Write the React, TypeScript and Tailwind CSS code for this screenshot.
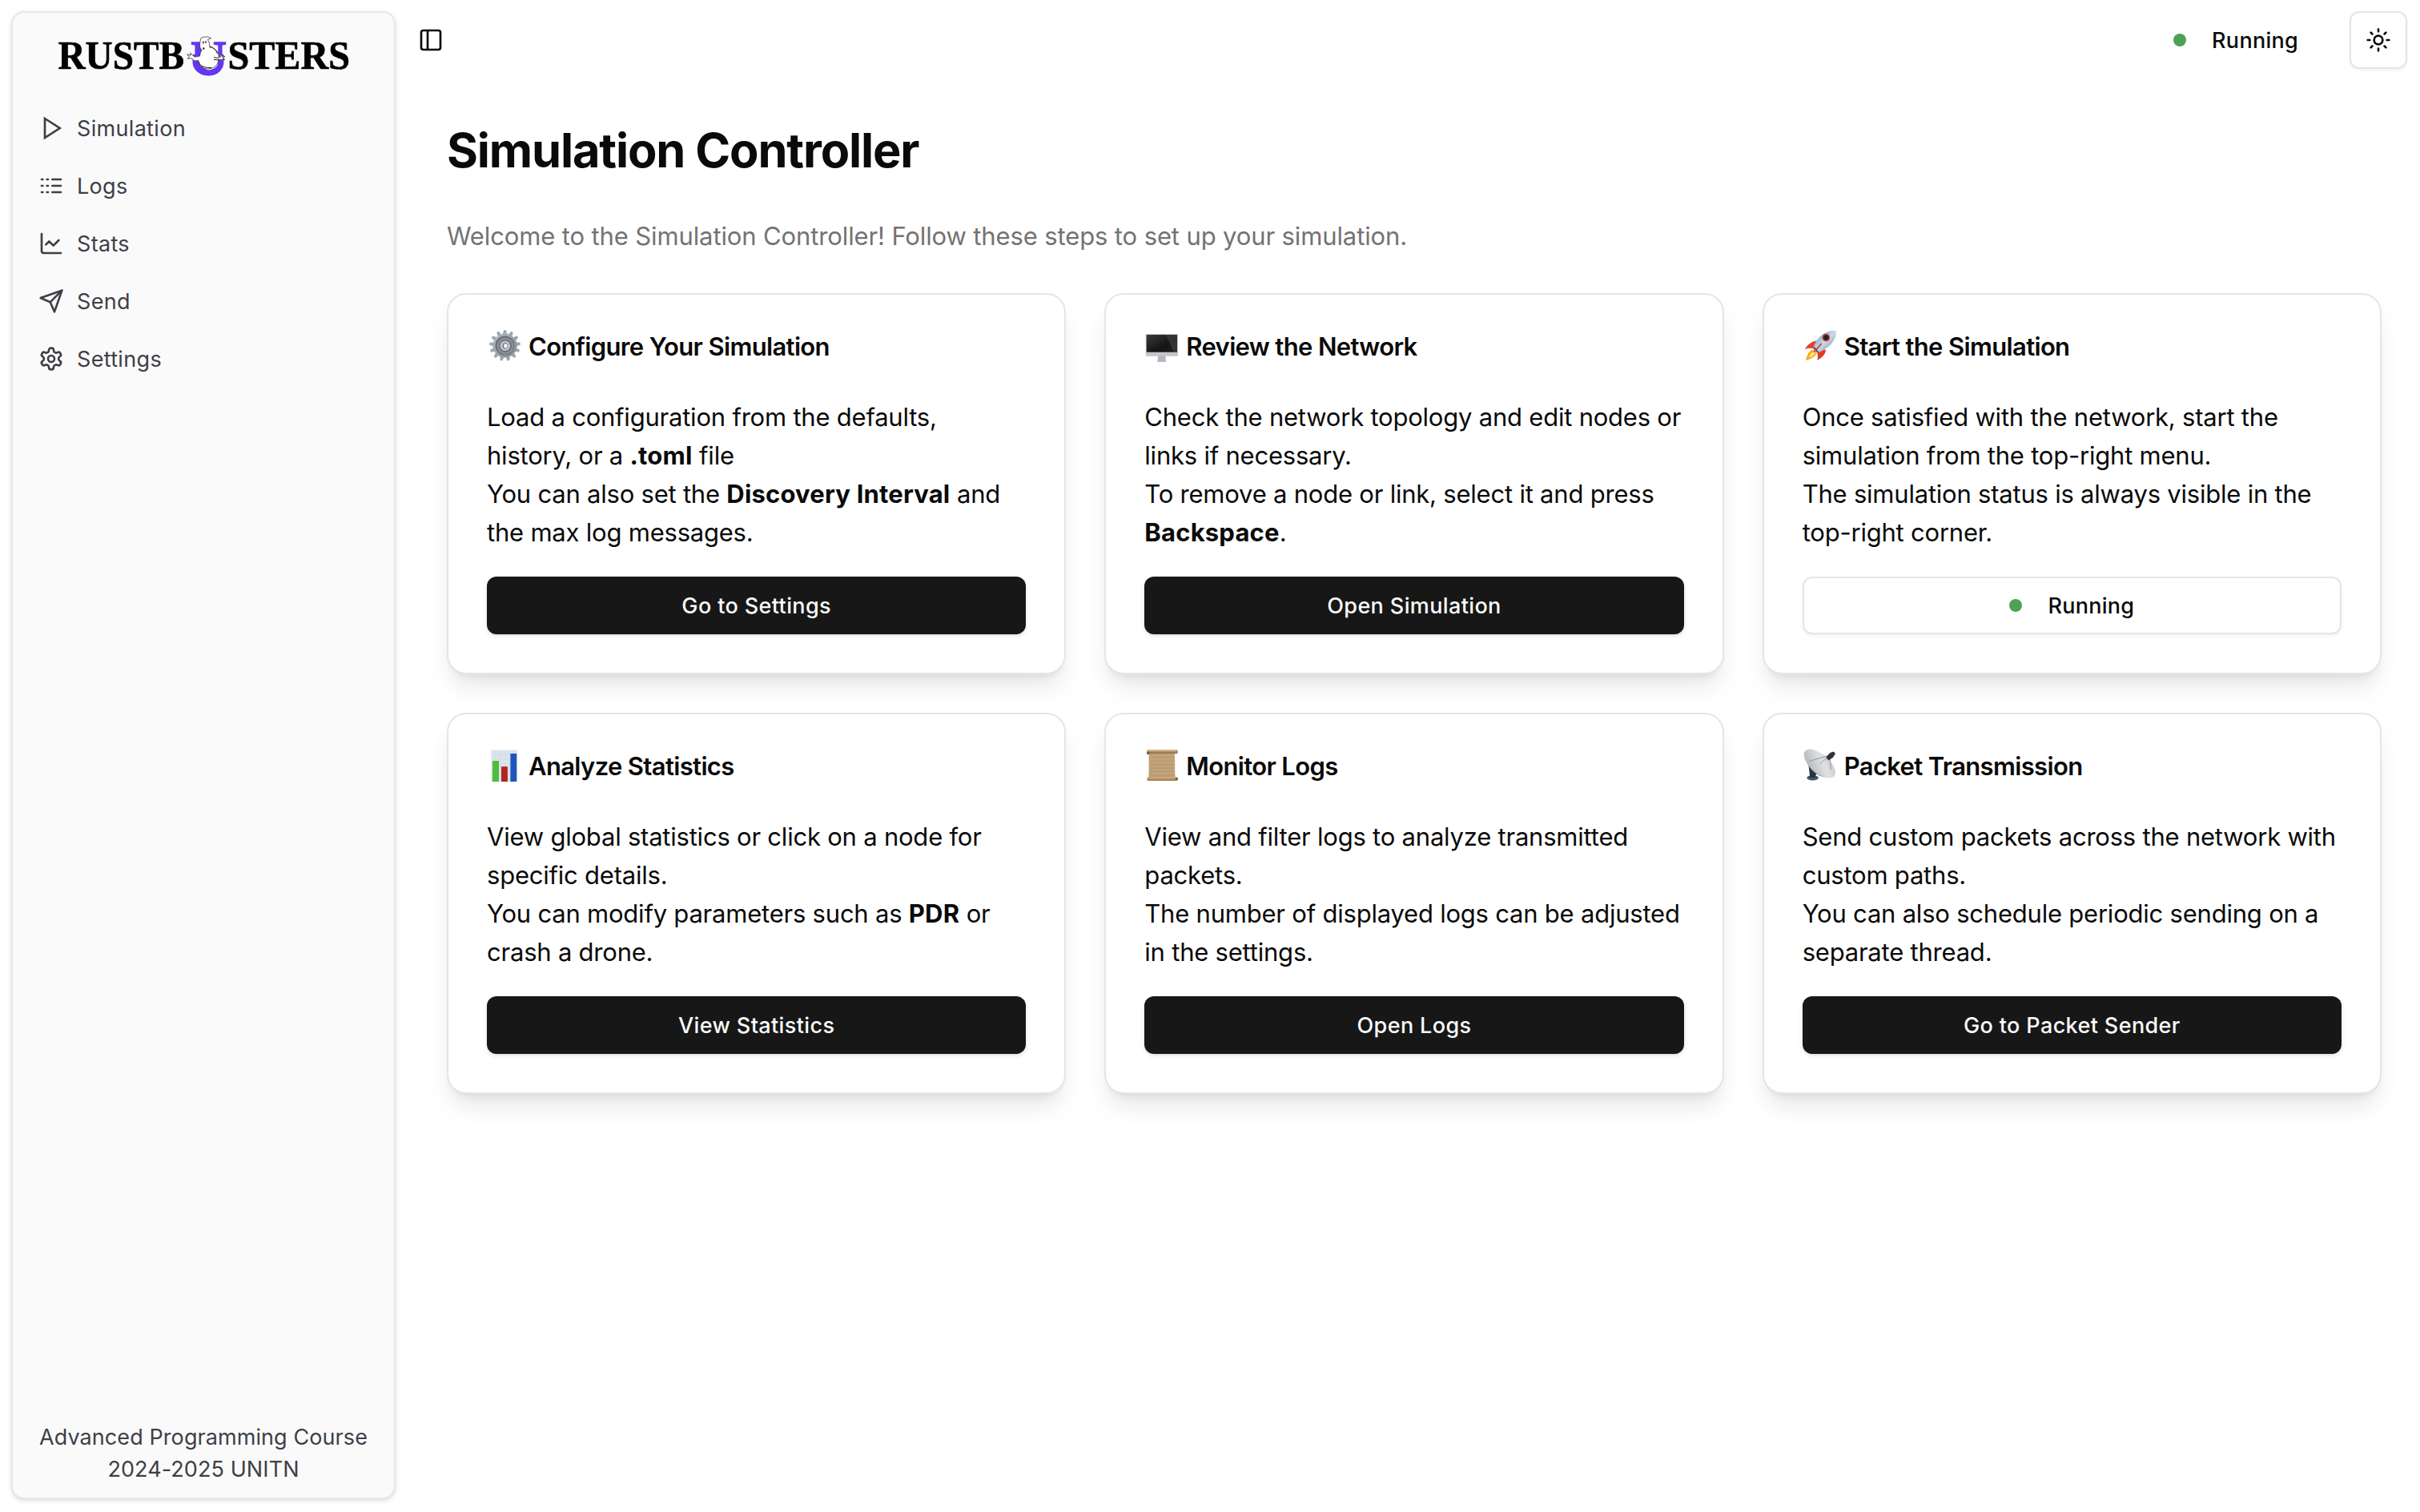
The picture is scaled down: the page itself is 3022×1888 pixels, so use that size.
import type { ReactNode } from "react";

function Icon({ children }: { children: ReactNode }) {
  return (
    <svg
      viewBox="0 0 24 24"
      className="size-8 shrink-0"
      fill="none"
      stroke="currentColor"
      strokeWidth="2"
      strokeLinecap="round"
      strokeLinejoin="round"
    >
      {children}
    </svg>
  );
}

const navItems: { label: string; icon: ReactNode }[] = [
  { label: "Simulation", icon: <polygon points="6 3 20 12 6 21 6 3" strokeLinejoin="miter" /> },
  {
    label: "Logs",
    icon: <path d="M13 12h8M13 18h8M13 6h8M3 12h1M3 18h1M3 6h1M8 12h1M8 18h1M8 6h1" />,
  },
  {
    label: "Stats",
    icon: (
      <>
        <path d="M3 3v16a2 2 0 0 0 2 2h16" />
        <path d="m19 9-5 5-4-4-3 3" />
      </>
    ),
  },
  {
    label: "Send",
    icon: (
      <>
        <path d="m22 2-7 20-4-9-9-4Z" />
        <path d="M22 2 11 13" />
      </>
    ),
  },
  {
    label: "Settings",
    icon: (
      <>
        <path d="M12.22 2h-.44a2 2 0 0 0-2 2v.18a2 2 0 0 1-1 1.73l-.43.25a2 2 0 0 1-2 0l-.15-.08a2 2 0 0 0-2.73.73l-.22.38a2 2 0 0 0 .73 2.73l.15.1a2 2 0 0 1 1 1.72v.51a2 2 0 0 1-1 1.74l-.15.09a2 2 0 0 0-.73 2.73l.22.38a2 2 0 0 0 2.73.73l.15-.08a2 2 0 0 1 2 0l.43.25a2 2 0 0 1 1 1.73V20a2 2 0 0 0 2 2h.44a2 2 0 0 0 2-2v-.18a2 2 0 0 1 1-1.73l.43-.25a2 2 0 0 1 2 0l.15.08a2 2 0 0 0 2.73-.73l.22-.39a2 2 0 0 0-.73-2.73l-.15-.08a2 2 0 0 1-1-1.74v-.5a2 2 0 0 1 1-1.74l.15-.09a2 2 0 0 0 .73-2.73l-.22-.38a2 2 0 0 0-2.73-.73l-.15.08a2 2 0 0 1-2 0l-.43-.25a2 2 0 0 1-1-1.73V4a2 2 0 0 0-2-2z" />
        <circle cx="12" cy="12" r="3" />
      </>
    ),
  },
];

function Logo() {
  return (
    <svg viewBox="70 30 370 80" className="h-20 w-[370px] overflow-visible">
      <g fontFamily="'Liberation Serif', serif" fontWeight="700">
        <g fill="#000" stroke="#000" strokeWidth=".7">
          <text x="73.5" y="86.400" fontSize="50.500" textLength="157.500" lengthAdjust="spacingAndGlyphs">
            RUSTB
          </text>
          <text x="285.5" y="86.400" fontSize="50.500" textLength="152.500" lengthAdjust="spacingAndGlyphs">
            STERS
          </text>
        </g>
        <text x="239" y="92.500" fontSize="62" textLength="45" lengthAdjust="spacingAndGlyphs" fill="#6336f5" stroke="#6336f5" strokeWidth="1.500">
          U
        </text>
      </g>
      <path d="M245 68v9.500a16 13.500 0 0 0 32 0V68" fill="none" stroke="#6336f5" strokeWidth="7" />
      <path
        d="M252 47.700c2-1.500 6-2 8.500-1.700l4 1.800-4.200 1.700c2.300 3.500 2.700 6 2.400 9.500 6 0 11.500 5.500 11.700 12.200l2.800-3.500 1 3 3.800-.2-3.300 2.500 3.200 1.300-4.500.4-3.600-.4C273.500 81.500 268 86 260 86c-6 0-10.500-4-11.300-10.500l-4.700.6-4.200-3.300-4.800.3 2.600-2-3.100-3.300 4.700 1.300-.5-3 5.200 5 6.600-1.100c.4-3 .8-5.300 2.600-7.500-4-3-2.600-9.500-1.100-14.800z"
        fill="#fff"
        stroke="#333"
        strokeWidth=".8"
        strokeLinejoin="round"
      />
      <path
        d="M263 58c5 1.500 8 4.500 9.500 9M249 77c1 3 3 5 5.500 6.500M268 71.500l5 1 4-2M268 74.500l7 .5M253 82.500c4 1.500 8 2.500 12 2"
        fill="none"
        stroke="#222"
        strokeWidth="1"
      />
      <ellipse cx="254.800" cy="53" rx=".8" ry="1.400" fill="#111" />
      <ellipse cx="258" cy="52.600" rx=".8" ry="1.400" fill="#111" />
      <ellipse cx="255.300" cy="60.500" rx="1.200" ry="1.300" fill="#222" />
    </svg>
  );
}

const gearTeeth = Array.from({ length: 13 }, (_, i) => (i * 360) / 13);

function GearEmoji() {
  return (
    <svg viewBox="8 8 44 44" className="-mt-px size-11 shrink-0">
      <defs>
        <linearGradient id="gear" x1="0" y1="0" x2="1" y2="1">
          <stop offset="0" stopColor="#b4bdc5" />
          <stop offset="1" stopColor="#818a93" />
        </linearGradient>
      </defs>
      {gearTeeth.map((a) => (
        <path key={a} d="M27.700 18.500 29 12.200h3l1.300 6.300z" fill="#9ca7b1" transform={`rotate(${a} 30.500 31.500)`} />
      ))}
      <circle cx="30.500" cy="31.500" r="15" fill="url(#gear)" />
      <circle cx="30.500" cy="31.500" r="12" fill="#666e76" />
      <circle cx="31" cy="32" r="10.500" fill="#8b939a" />
      <circle cx="31" cy="32" r="8" fill="#6b7279" />
      <circle cx="30.800" cy="31.700" r="6.300" fill="#bcc3c9" />
      <ellipse cx="30.800" cy="31.800" rx="3.200" ry="3.600" fill="#6d747b" />
      <ellipse cx="31.300" cy="32" rx="2.100" ry="2.700" fill="#fff" />
    </svg>
  );
}

function MonitorEmoji() {
  return (
    <svg viewBox="9.300 8 44 44" className="-mt-px size-11 shrink-0">
      <defs>
        <linearGradient id="screen" x1="0" y1="0" x2="1" y2="1">
          <stop offset="0" stopColor="#3b3b3b" />
          <stop offset=".6" stopColor="#151515" />
          <stop offset="1" stopColor="#1e1e1e" />
        </linearGradient>
      </defs>
      <path d="M26.300 44h9.400l.6 8H25.700z" fill="#b5b7bb" />
      <rect x="11" y="17" width="40.300" height="27.800" rx="1.200" fill="#c3c5c9" />
      <rect x="12" y="18" width="38.300" height="21.700" fill="url(#screen)" />
      <path d="M36 18h14.300v21.700H46z" fill="#444" opacity=".6" />
    </svg>
  );
}

function RocketEmoji() {
  return (
    <svg viewBox="10.700 8 44 44" className="-mt-px size-11 shrink-0">
      <defs>
        <linearGradient id="hull" x1="0" y1="0" x2="1" y2="1">
          <stop offset=".1" stopColor="#5b8fc2" />
          <stop offset=".5" stopColor="#cfdbe6" />
          <stop offset="1" stopColor="#557fae" />
        </linearGradient>
      </defs>
      <path d="M29.500 25.500c-7 .3-12 4-16 10.500 4-1.300 8-1.500 12-.5z" fill="#e5402a" />
      <path d="M39.500 36.500c.5 5-4 10-10.500 13.500 1.200-4 .8-8-1-11.500z" fill="#e03a24" />
      <path d="M24 36.500c-4 .5-7.500 5-9.300 13.500 6.800-1.800 11.500-4.300 13.300-9z" fill="#f6a51d" />
      <path d="M24.500 39c-3 1-5 4-6.500 7.700 4-.7 6.800-2.500 8.500-5.200z" fill="#ffe36a" />
      <path d="M52.300 13.300c1 6-2.500 13.500-8.500 18.800-4.500 4-9.800 7.300-14.800 8.400l-5-5.500c1-5 4.500-10.500 8.500-14.700 5.500-5.300 13-8.300 19.800-7z" fill="url(#hull)" />
      <path d="m24 35 5 5.500 2-1-5.700-6.500z" fill="#4a5360" />
      <circle cx="40" cy="21.500" r="4.800" fill="#c8382c" />
      <circle cx="40" cy="21.500" r="3.200" fill="#2a2027" />
      <path d="m34 29.500-8.500 9.500" stroke="#c8382c" strokeWidth="1.800" strokeLinecap="round" />
    </svg>
  );
}

function ChartEmoji() {
  return (
    <svg viewBox="8 7 44 44" className="-mt-px size-11 shrink-0">
      <rect x="13.300" y="11.500" width="32.700" height="39.500" fill="#dce5ed" />
      <path d="M14 17h31.500M14 23h31.500M14 29h31.500M14 35h31.500M14 41h31.500M14 47h31.500M19 12v39M25 12v39M31 12v39M37 12v39M43 12v39" stroke="#cbd8e4" strokeWidth=".6" />
      <rect x="15" y="25" width="8" height="26" fill="#4fbc3c" />
      <rect x="26" y="32.200" width="7.900" height="18.800" fill="#b3251e" />
      <rect x="37.400" y="16" width="7.800" height="35" fill="#1f55bd" />
    </svg>
  );
}

function ScrollEmoji() {
  return (
    <svg viewBox="9.300 7 44 44" className="-mt-px size-11 shrink-0">
      <path d="M15 15h32c1 10 0 21 1 32H14.500c1-11 0-21 .5-32z" fill="#c2a279" />
      <path d="M16.500 20.500H46M16.500 25H46M16 29.500h29.500M16 34h29.500M16 38.500h30M15.500 43H47" stroke="#b0906a" strokeWidth=".8" />
      <rect x="12.500" y="11.600" width="38.500" height="4.600" rx="1.500" fill="#a07c52" />
      <rect x="14" y="11.600" width="35.500" height="1.800" fill="#cdb08a" />
      <rect x="12.800" y="45.600" width="38" height="4.500" rx="1.500" fill="#a98559" />
      <rect x="14" y="45.600" width="34" height="1.700" fill="#cdb08a" />
      <rect x="12.500" y="14" width="3" height="3" fill="#7b5a38" />
      <rect x="48.500" y="45.800" width="2.500" height="3.200" fill="#7b5a38" />
    </svg>
  );
}

function DishEmoji() {
  return (
    <svg viewBox="10.700 7 44 44" className="-mt-px size-11 shrink-0">
      <defs>
        <linearGradient id="dish" x1="0" y1="1" x2="1" y2="0">
          <stop offset="0" stopColor="#a9adb2" />
          <stop offset=".6" stopColor="#dfe1e4" />
          <stop offset="1" stopColor="#bfc2c6" />
        </linearGradient>
      </defs>
      <ellipse cx="23.300" cy="46.300" rx="7.200" ry="3.200" fill="#41556e" />
      <path d="M18 29l10 12-2 5h-6z" fill="#2c3238" />
      <path d="M13.500 13.500c-1 11 5 21 14 27.500 7.500 5 15.500 6 22.500 3.500z" fill="#9a9ea3" />
      <ellipse cx="32" cy="28.500" rx="24" ry="11.500" transform="rotate(41 32 28.500)" fill="url(#dish)" />
      <path d="M19 25.500 43 18.500M32 29 43 19.500M46 36l-1-15" stroke="#8b8f94" strokeWidth=".9" fill="none" />
      <path d="m40 20.500 5-5.500 4.500-1.500 2.200 2.500-3.200 5-5.500 3.500z" fill="#2f3337" />
    </svg>
  );
}

function StatusDot() {
  return <span className="size-4 rounded-full bg-[#4ea255]" />;
}

interface CardData {
  emoji: ReactNode;
  title: string;
  body: ReactNode;
  action?: string;
}

function Strong({ children }: { children: ReactNode }) {
  return <strong className="font-bold tracking-[0.006em]">{children}</strong>;
}

const cards: CardData[] = [
  {
    emoji: <GearEmoji />,
    title: "Configure Your Simulation",
    body: (
      <>
        Load a configuration from the defaults,
        <br />
        history, or a <Strong>.toml</Strong> file
        <br />
        You can also set the <Strong>Discovery Interval</Strong> and
        <br />
        the max log messages.
      </>
    ),
    action: "Go to Settings",
  },
  {
    emoji: <MonitorEmoji />,
    title: "Review the Network",
    body: (
      <>
        Check the network topology and edit nodes or
        <br />
        links if necessary.
        <br />
        To remove a node or link, select it and press
        <br />
        <Strong>Backspace</Strong>.
      </>
    ),
    action: "Open Simulation",
  },
  {
    emoji: <RocketEmoji />,
    title: "Start the Simulation",
    body: (
      <>
        Once satisfied with the network, start the
        <br />
        simulation from the top-right menu.
        <br />
        The simulation status is always visible in the
        <br />
        top-right corner.
      </>
    ),
  },
  {
    emoji: <ChartEmoji />,
    title: "Analyze Statistics",
    body: (
      <>
        View global statistics or click on a node for
        <br />
        specific details.
        <br />
        You can modify parameters such as <Strong>PDR</Strong> or
        <br />
        crash a drone.
      </>
    ),
    action: "View Statistics",
  },
  {
    emoji: <ScrollEmoji />,
    title: "Monitor Logs",
    body: (
      <>
        View and filter logs to analyze transmitted
        <br />
        packets.
        <br />
        The number of displayed logs can be adjusted
        <br />
        in the settings.
      </>
    ),
    action: "Open Logs",
  },
  {
    emoji: <DishEmoji />,
    title: "Packet Transmission",
    body: (
      <>
        Send custom packets across the network with
        <br />
        custom paths.
        <br />
        You can also schedule periodic sending on a
        <br />
        separate thread.
      </>
    ),
    action: "Go to Packet Sender",
  },
];

function Card({ emoji, title, body, action }: CardData) {
  return (
    <section className="flex h-[476px] flex-col rounded-3xl border-2 border-[#e5e5e5] bg-white px-12 pt-[41px] pb-12 shadow-[0_20px_30px_-6px_rgba(0,0,0,0.1),0_8px_12px_-8px_rgba(0,0,0,0.1)]">
      <h2 className="flex h-12 items-start gap-2 text-[31px] leading-[48px] font-semibold tracking-[-0.021em] whitespace-nowrap">
        {emoji}
        {title}
      </h2>
      <p className="mt-10 text-[31px] leading-[48px] tracking-[-0.007em] whitespace-nowrap">{body}</p>
      {action ? (
        <button className="mt-[31px] h-[72px] w-full shrink-0 rounded-xl bg-[#171717] pt-0.5 text-[27px] leading-10 font-medium tracking-[0.014em] text-[#fafafa] shadow-[0_2px_6px_rgba(0,0,0,0.1),0_2px_4px_-2px_rgba(0,0,0,0.1)]">
          {action}
        </button>
      ) : (
        <button className="mt-[31px] flex h-[72px] w-full shrink-0 items-center justify-center gap-8 rounded-xl border-2 border-[#e5e5e5] text-[27px] leading-10 font-medium tracking-[0.01em] shadow-[0_2px_4px_rgba(0,0,0,0.05)]">
          <StatusDot />
          <span className="pt-0.5">Running</span>
        </button>
      )}
    </section>
  );
}

export default function App() {
  return (
    <div className="flex h-[1888px] w-[3022px] overflow-hidden bg-white font-['Inter',sans-serif] text-[#0a0a0a]">
      <div className="w-[510px] shrink-0 pt-3.5 pr-4 pb-4 pl-3.5">
        <aside className="flex h-full flex-col rounded-2xl border-2 border-[#e5e7eb] bg-[#fafafa] px-4 pt-4 pb-[15px] text-[27px] leading-10 text-[#3f3f46] shadow-[0_2px_6px_rgba(0,0,0,0.1),0_2px_4px_-2px_rgba(0,0,0,0.1)]">
          <div className="-mt-0.5 flex h-[98px] justify-center">
            <Logo />
          </div>
          <nav className="flex flex-col gap-2">
            {navItems.map((item) => (
              <a key={item.label} className="flex h-16 items-center gap-4 px-4">
                <Icon>{item.icon}</Icon>
                <span className="pt-0.5 tracking-[0.012em]">{item.label}</span>
              </a>
            ))}
          </nav>
          <footer className="mt-auto text-center tracking-[0.003em] whitespace-nowrap">
            Advanced Programming Course
            <br />
            2024-2025 UNITN
          </footer>
        </aside>
      </div>
      <div className="flex flex-1 flex-col">
        <header className="flex h-[100px] items-center justify-between pr-4 pl-3">
          <Icon>
            <rect width="18" height="18" x="3" y="3" rx="2" />
            <path d="M9 3v18" />
          </Icon>
          <div className="flex items-center gap-16">
            <div className="flex items-center gap-8 text-[27px] leading-10 font-medium tracking-[0.01em]">
              <StatusDot />
              <span className="pt-0.5">Running</span>
            </div>
            <button className="flex size-[72px] items-center justify-center rounded-xl border-2 border-[#e5e5e5] shadow-[0_2px_4px_rgba(0,0,0,0.05)]">
              <Icon>
                <circle cx="12" cy="12" r="4" />
                <path d="M12 2v2M12 20v2m-7.070-17.070 1.410 1.410m11.320 11.320 1.410 1.410M2 12h2m16 0h2M6.340 17.660l-1.410 1.410M19.070 4.930l-1.410 1.410" />
              </Icon>
            </button>
          </div>
        </header>
        <main className="flex flex-col px-12 pt-[51px]">
          <h1 className="text-[59.500px] leading-[72px] font-bold tracking-[-0.019em]">Simulation Controller</h1>
          <p className="mt-12 text-[31px] leading-[48px] tracking-[-0.004em] text-[#737373]">
            Welcome to the Simulation Controller! Follow these steps to set up your simulation.
          </p>
          <div className="mt-[47px] grid grid-cols-3 gap-12">
            {cards.map((card) => (
              <Card key={card.title} {...card} />
            ))}
          </div>
        </main>
      </div>
    </div>
  );
}
